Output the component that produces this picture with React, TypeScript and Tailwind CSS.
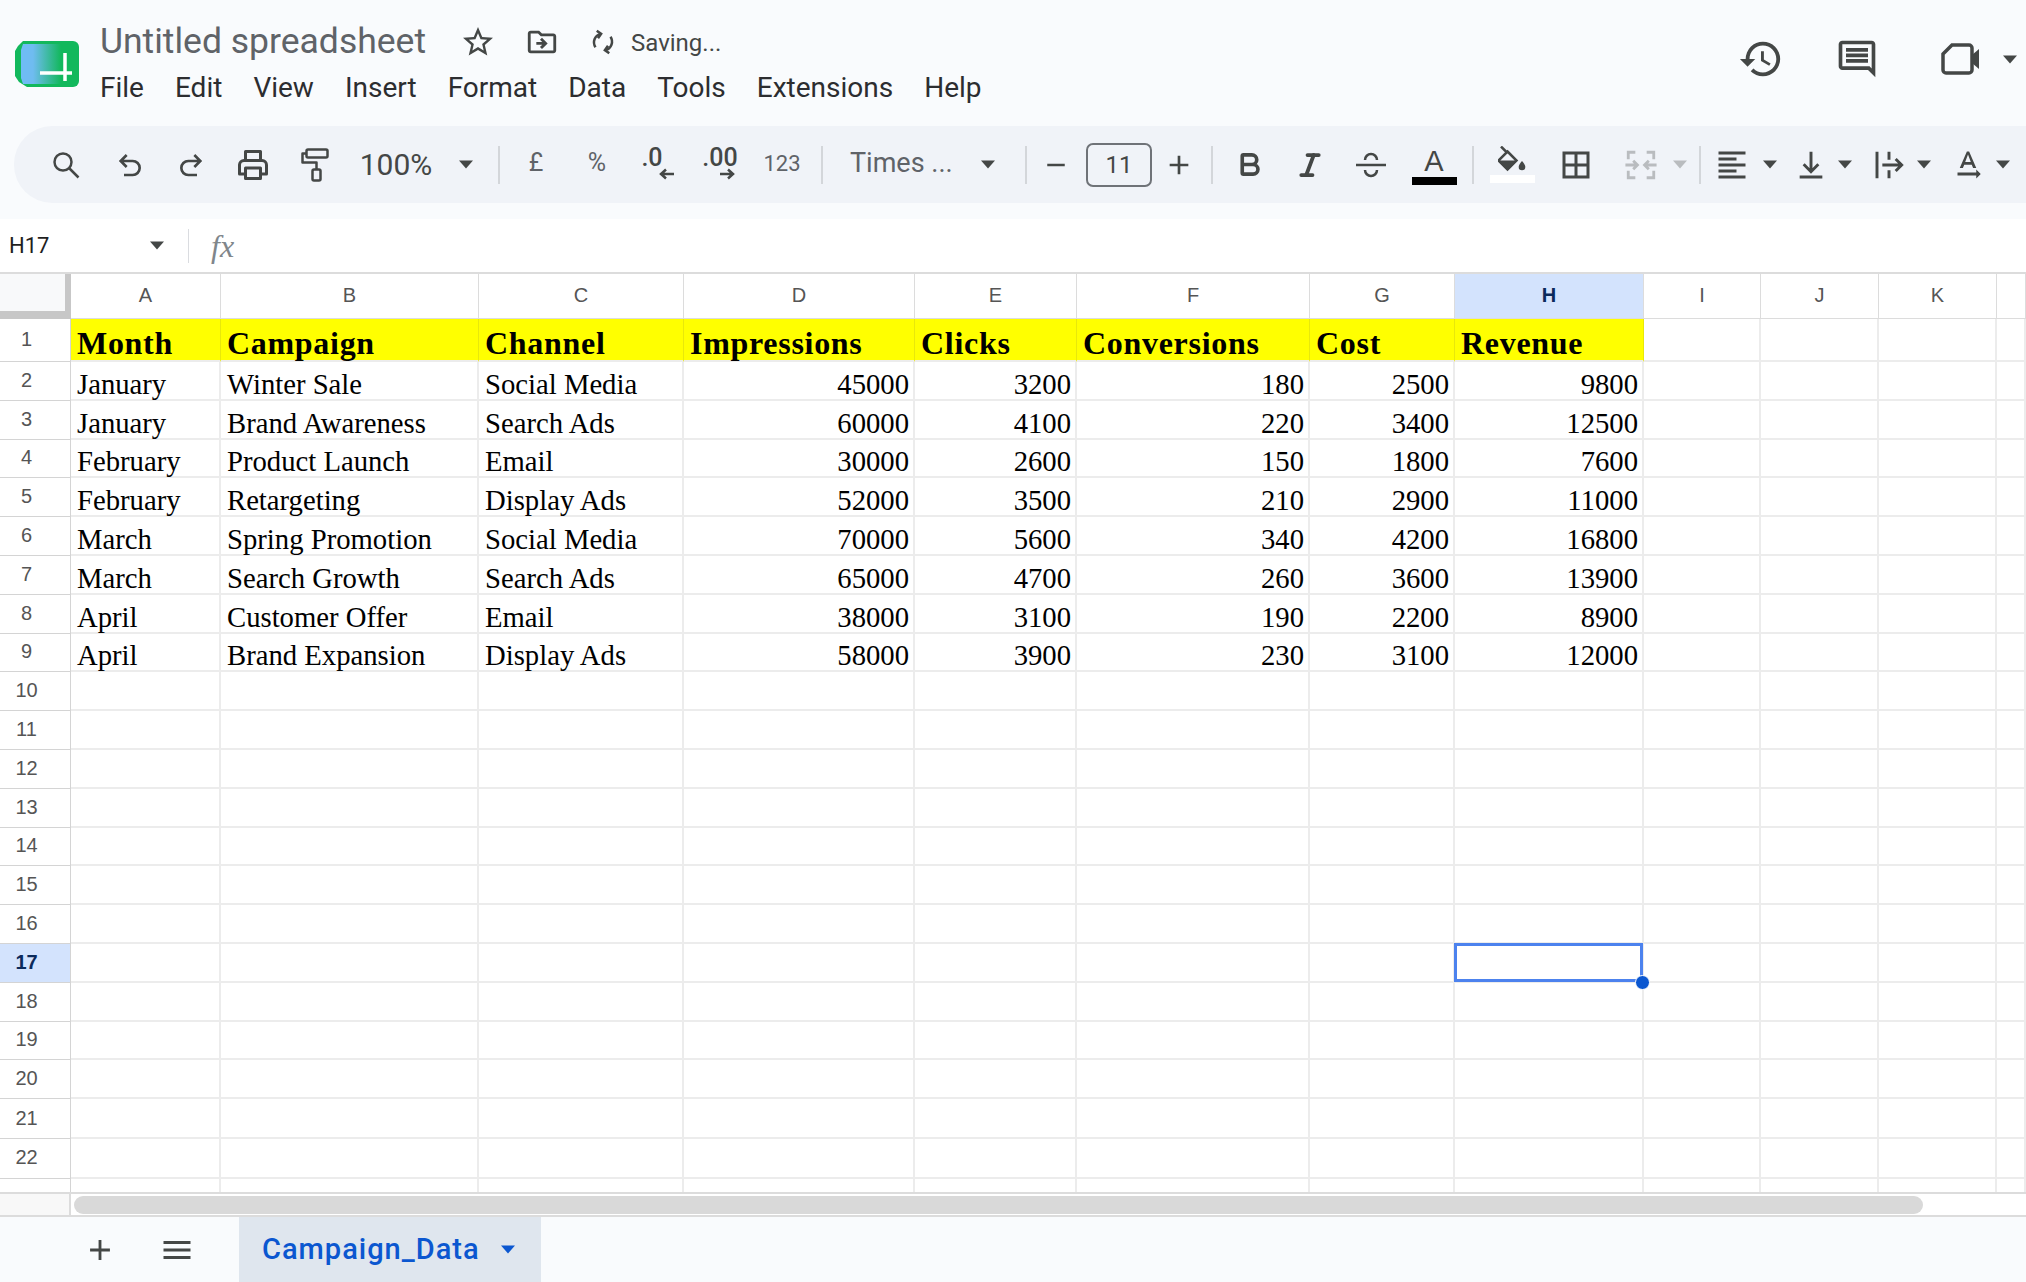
import type { ReactNode } from "react";
import { Bold, Italic } from "lucide-react";
import {
  MdBorderAll,
  MdFormatAlignLeft,
  MdTextRotationNone,
  MdAdd,
  MdRemove,
  MdMenu,
  MdOutlineStarBorder,
  MdOutlineDriveFileMove,
  MdHistory,
} from "react-icons/md";

const sheetCols = "grid-cols-[71px_150px_258px_205px_231px_162px_233px_145px_189px_117px_118px_118px_29px]";
const columns = ["A", "B", "C", "D", "E", "F", "G", "H", "I", "J", "K", ""];
const headers = ["Month", "Campaign", "Channel", "Impressions", "Clicks", "Conversions", "Cost", "Revenue"];
const rows = [
  ["January", "Winter Sale", "Social Media", "45000", "3200", "180", "2500", "9800"],
  ["January", "Brand Awareness", "Search Ads", "60000", "4100", "220", "3400", "12500"],
  ["February", "Product Launch", "Email", "30000", "2600", "150", "1800", "7600"],
  ["February", "Retargeting", "Display Ads", "52000", "3500", "210", "2900", "11000"],
  ["March", "Spring Promotion", "Social Media", "70000", "5600", "340", "4200", "16800"],
  ["March", "Search Growth", "Search Ads", "65000", "4700", "260", "3600", "13900"],
  ["April", "Customer Offer", "Email", "38000", "3100", "190", "2200", "8900"],
  ["April", "Brand Expansion", "Display Ads", "58000", "3900", "230", "3100", "12000"],
];
const menu = ["File", "Edit", "View", "Insert", "Format", "Data", "Tools", "Extensions", "Help"];

const Slot = ({ className, children }: { className: string; children?: ReactNode }) => (
  <div className={`flex shrink-0 items-center justify-center ${className}`}>{children}</div>
);

const Sep = ({ className }: { className: string }) => (
  <Slot className={className}>
    <div className="h-[38px] w-[2px] bg-[#d3d6da]" />
  </Slot>
);

const Caret = ({ light }: { light?: boolean }) => (
  <svg width="16" height="9" viewBox="0 0 16 9" className="shrink-0">
    <path d="M1 0.5h14L8 8.5z" fill={light ? "#b9bcbf" : "#444746"} />
  </svg>
);

const Logo = () => (
  <svg width="64" height="48" viewBox="0 0 64 48">
    <defs>
      <linearGradient id="logoFill" x1="0" x2="1" y1="0" y2="0">
        <stop offset="0" stopColor="#6fbcf6" />
        <stop offset="0.3" stopColor="#6fbcf0" />
        <stop offset="1" stopColor="#12b85c" />
      </linearGradient>
    </defs>
    <path d="M8 1h50a6 6 0 0 1 6 6v34a6 6 0 0 1-6 6H12L4 42 0 36V11l3-5z" fill="#12b85c" />
    <path d="M8 4h38v40H8l-2-6V10z" fill="url(#logoFill)" />
    <path d="M25 33h32M50 13v28" stroke="#fff" strokeWidth="3.5" fill="none" />
  </svg>
);

const Undo = ({ flip }: { flip?: boolean }) => (
  <svg width="32" height="32" viewBox="0 0 24 24" className={flip ? "-scale-x-100" : ""} fill="none" stroke="#444746" strokeWidth="2">
    <path d="M9.500 4.500 5 9l4.500 4.500M5 9h9a5 5 0 0 1 0 10.500H7.500" />
  </svg>
);

const DecimalArrow = ({ left }: { left?: boolean }) => (
  <svg width="16" height="12" viewBox="0 0 16 12" fill="none" stroke="#444746" strokeWidth="2.500" className={left ? "-scale-x-100" : ""}>
    <path d="M1 6h13M9 1.500 14 6l-5 4.500" />
  </svg>
);

const SearchIcon = () => (
  <svg width="28" height="28" viewBox="0 0 28 28" fill="none" stroke="#444746" strokeWidth="2.500">
    <circle cx="11" cy="11" r="8.500" />
    <path d="M17 17l9.500 9.500" />
  </svg>
);

const PrintIcon = () => (
  <svg width="36" height="36" viewBox="0 0 24 24" fill="none" stroke="#444746" strokeWidth="2" strokeLinejoin="round">
    <path d="M7 8V3h10v5M7 18H3v-6a3 3 0 0 1 3-3h12a3 3 0 0 1 3 3v6h-4M7 14h10v7H7z" />
  </svg>
);

const PaintIcon = () => (
  <svg width="30" height="34" viewBox="0 0 30 34" fill="none" stroke="#444746" strokeWidth="2.500" strokeLinejoin="round">
    <rect x="7.500" y="1.500" width="21" height="8" rx="1.500" />
    <path d="M7.500 5.500h-4v9h14v7" />
    <rect x="13.500" y="21.500" width="8" height="11" rx="1.500" />
  </svg>
);

const StrikeIcon = () => (
  <svg width="32" height="32" viewBox="0 0 32 32" fill="none" stroke="#444746" strokeWidth="2.500">
    <path d="M1 16h30M10 11a6 6 0 0 1 12 0M10 21a6 6 0 0 0 12 0" />
  </svg>
);

const FillIcon = () => (
  <svg width="28" height="26" viewBox="0 0 28 26" stroke="#444746" fill="#444746">
    <path d="M3 0.500l6.500 6.500" fill="none" strokeWidth="2.500" />
    <path d="M9.500 5.500l9 9-9 9-9-9z" fill="none" strokeWidth="2.500" />
    <path d="M1 14.500h17l-8.500 8.500z" stroke="none" />
    <path d="M24 15s-3.300 3.500-3.300 6a3.300 3.300 0 0 0 6.600 0c0-2.500-3.300-6-3.300-6z" stroke="none" />
  </svg>
);

const Merge = () => (
  <svg width="34" height="34" viewBox="0 0 24 24" fill="none" stroke="#b9bcbf" strokeWidth="2">
    <path d="M8 3H3v5M3 16v5h5M16 3h5v5M21 16v5h-5" />
    <path d="M1 12h8M6.500 9l3 3-3 3M23 12h-8M17.500 9l-3 3 3 3" />
  </svg>
);

const ValignIcon = () => (
  <svg width="32" height="32" viewBox="0 0 24 24" fill="none" stroke="#444746" strokeWidth="2.200">
    <path d="M12 2v15M6.500 11.500 12 17l5.500-5.500M3.500 21h17" />
  </svg>
);

const Wrap = () => (
  <svg width="32" height="32" viewBox="0 0 24 24" fill="none" stroke="#444746" strokeWidth="2.200">
    <path d="M3 2v20M12 2v6M12 16v6M7 12h14M17 7.500l4.500 4.500-4.500 4.500" />
  </svg>
);

const Sync = () => (
  <svg width="30" height="30" viewBox="0 0 24 24" fill="none" stroke="#444746" strokeWidth="2">
    <path d="M10 5.500a7 7 0 0 0-4 10.700M14 18.500a7 7 0 0 0 4-10.700" />
    <path d="M7 3l3.500 2.500L8 9M17 21l-3.500-2.500L16 15" />
  </svg>
);

const Comment = () => (
  <svg width="44" height="44" viewBox="0 0 24 24" fill="#444746">
    <path d="M21.990 4c0-1.100-.89-2-1.990-2H4c-1.100 0-2 .9-2 2v12c0 1.100.9 2 2 2h14l4 4-.01-18zM20 4v13.170L18.830 16H4V4h16zM6 12h12v2H6zm0-3h12v2H6zm0-3h12v2H6z" />
  </svg>
);

const Meet = () => (
  <svg width="42" height="34" viewBox="0 0 42 34">
    <path d="M12 3h17a3 3 0 0 1 3 3v22a3 3 0 0 1-3 3H6a3 3 0 0 1-3-3V12z" fill="none" stroke="#444746" strokeWidth="3.500" />
    <path d="M32 13l7-6v20l-7-6z" fill="#444746" />
  </svg>
);

function TitleBar() {
  return (
    <div className="flex h-[126px] items-start">
      <div className="ml-[15px] mt-[40px] shrink-0">
        <Logo />
      </div>
      <div className="ml-[21px] flex flex-col">
        <div className="mt-[20px] flex h-[44px] items-center text-[#444746]">
          <span className="w-[360px] text-[35.5px] leading-none text-[#5f6368]">Untitled spreadsheet</span>
          <MdOutlineStarBorder className="text-[36px]" />
          <MdOutlineDriveFileMove className="ml-[29px] text-[34px]" />
          <div className="ml-[29px]">
            <Sync />
          </div>
          <span className="ml-[13px] mt-[2px] text-[24px]">Saving...</span>
        </div>
        <div className="mt-[2px] flex gap-[31px] text-[28px] leading-[44px] text-[#2c2d30]">
          {menu.map((m) => (
            <span key={m}>{m}</span>
          ))}
        </div>
      </div>
      <div className="ml-auto mt-[36px] flex items-center">
        <MdHistory className="text-[46px] text-[#444746]" />
        <div className="ml-[51px]">
          <Comment />
        </div>
        <div className="ml-[61px]">
          <Meet />
        </div>
        <div className="ml-[20px] mr-[8px]">
          <Caret />
        </div>
      </div>
    </div>
  );
}

function Toolbar() {
  return (
    <div className="ml-[14px] flex h-[77px] items-center overflow-hidden rounded-l-[38px] bg-[#f0f3f8] pl-[22px] text-[#444746]">
      <Slot className="w-[60px]"><SearchIcon /></Slot>
      <Slot className="w-[68px]"><Undo /></Slot>
      <Slot className="w-[54px]"><Undo flip /></Slot>
      <Slot className="w-[70px]"><PrintIcon /></Slot>
      <Slot className="w-[52px]"><PaintIcon /></Slot>
      <Slot className="w-[112px] text-[30px]">100%</Slot>
      <Slot className="w-[28px]"><Caret /></Slot>
      <Sep className="w-[38px]" />
      <Slot className="w-[36px] pb-[4px] text-[25px] text-[#5f6368]">£</Slot>
      <Slot className="w-[86px] pb-[4px] text-[25px] text-[#5f6368]">%</Slot>
      <Slot className="w-[34px] flex-col pb-[2px] text-[25px] font-medium leading-[21px]">
        <span className="mr-[10px]">.0</span>
        <div className="ml-[20px]">
          <DecimalArrow left />
        </div>
      </Slot>
      <Slot className="w-[92px] flex-col pb-[2px] text-[25px] font-medium leading-[21px]">
        <span>.00</span>
        <div className="ml-[14px]">
          <DecimalArrow />
        </div>
      </Slot>
      <Slot className="w-[32px] pb-[3px] text-[22px] text-[#5f6368]">123</Slot>
      <Sep className="w-[48px]" />
      <Slot className="w-[124px] justify-start pb-[2px] pl-[4px] text-[27px] text-[#5f6368]">Times ...</Slot>
      <Slot className="w-[36px]"><Caret /></Slot>
      <Sep className="w-[40px]" />
      <Slot className="w-[20px]"><MdRemove className="shrink-0 text-[30px]" /></Slot>
      <Slot className="ml-[20px] h-[44px] w-[66px] rounded-[7px] border-2 border-[#6f7378] text-[24px]">11</Slot>
      <Slot className="w-[54px]"><MdAdd className="text-[32px]" /></Slot>
      <Sep className="w-[12px]" />
      <Slot className="w-[62px]"><Bold size={29} strokeWidth={3} /></Slot>
      <Slot className="w-[60px]"><Italic size={30} strokeWidth={3} /></Slot>
      <Slot className="w-[62px]"><StrikeIcon /></Slot>
      <Slot className="w-[64px] flex-col pt-[3px]">
        <span className="font-['Liberation_Sans',sans-serif] text-[29px] leading-[27px]">A</span>
        <div className="mt-[2px] h-[8px] w-[45px] bg-black" />
      </Slot>
      <Sep className="w-[14px]" />
      <Slot className="w-[64px] flex-col">
        <FillIcon />
        <div className="mt-[3px] h-[8px] w-[45px] bg-white" />
      </Slot>
      <Slot className="w-[64px]"><MdBorderAll className="text-[36px]" /></Slot>
      <Slot className="w-[66px]"><Merge /></Slot>
      <Slot className="w-[12px]"><Caret light /></Slot>
      <Sep className="w-[28px]" />
      <Slot className="w-[36px]"><MdFormatAlignLeft className="text-[36px]" /></Slot>
      <Slot className="w-[40px]"><Caret /></Slot>
      <Slot className="w-[42px]"><ValignIcon /></Slot>
      <Slot className="w-[26px]"><Caret /></Slot>
      <Slot className="ml-[10px] w-[42px]"><Wrap /></Slot>
      <Slot className="w-[28px]"><Caret /></Slot>
      <Slot className="w-[60px]"><MdTextRotationNone className="text-[36px]" /></Slot>
      <Slot className="w-[10px]"><Caret /></Slot>
    </div>
  );
}

function FormulaBar() {
  return (
    <div className="flex h-[53px] items-center bg-white">
      <span className="ml-[9px] w-[140px] text-[22px] text-[#1f1f1f]">H17</span>
      <Caret />
      <div className="ml-[23px] h-[34px] w-px bg-[#dadce0]" />
      <span className="ml-[22px] font-['Liberation_Serif',serif] text-[32px] italic text-[#80868b]">fx</span>
    </div>
  );
}

function ColumnHeader() {
  return (
    <div className={`grid h-[47px] ${sheetCols} border-t-2 border-[#dcdcdc] bg-white`}>
      <div className="border-b-[8px] border-r-[6px] border-[#c7c7c7] bg-[#f8f9fa]" />
      {columns.map((c) => (
        <div
          key={c || "rest"}
          className={`flex items-center justify-center border-b border-r border-[#dcdcdc] pb-[3px] font-['Liberation_Sans',sans-serif] text-[20px] ${
            c === "H" ? "bg-[#d3e3fd] font-bold text-[#0b2a5b]" : "text-[#555]"
          }`}
        >
          {c}
        </div>
      ))}
    </div>
  );
}

function RowLabel({ n, active }: { n: number; active?: boolean }) {
  return (
    <div
      className={`flex items-center justify-center border-b border-r border-[#d4d4d4] pb-[2px] pl-[2px] pr-[19px] font-['Liberation_Sans',sans-serif] text-[20px] ${
        active ? "bg-[#d3e3fd] font-bold text-[#0b2a5b]" : "text-[#555]"
      }`}
    >
      {n < 23 ? n : ""}
    </div>
  );
}

function Sheet() {
  const cellBase = "border-b-2 border-r-2 border-[#ececec]";
  return (
    <div className="h-[873px] overflow-hidden bg-white font-['Liberation_Serif',serif]">
      <div className={`grid h-[43px] ${sheetCols}`}>
        <RowLabel n={1} />
        {headers.map((h) => (
          <div key={h} className="flex items-end border-b-2 border-r border-[#ececec] border-r-[#e8e80a] bg-[#ffff00] pl-[6px] text-[32px] font-bold leading-[33px] tracking-[0.7px] text-black">
            {h}
          </div>
        ))}
        {[0, 1, 2, 3].map((i) => (
          <div key={i} className={cellBase} />
        ))}
      </div>
      {Array.from({ length: 22 }, (_, r) => r + 2).map((n) => {
        const row = rows[n - 2];
        return (
          <div key={n} className={`grid ${n >= 21 ? "h-[39.8px]" : "h-[38.8px]"} ${sheetCols}`}>
            <RowLabel n={n} active={n === 17} />
            {Array.from({ length: 12 }, (_, c) => c).map((c) => {
              const text = row?.[c];
              const numeric = c >= 3;
              return (
                <div
                  key={c}
                  className={`relative flex items-end overflow-visible ${cellBase} pl-[6px] pr-[4px] text-[28.7px] leading-[30px] text-black ${
                    numeric ? "justify-end" : ""
                  }`}
                >
                  {text}
                  {n === 17 && c === 7 && (
                    <div className="absolute -inset-y-[1px] -left-px -right-[1px] z-10 border-[3px] border-[#4c82ee]">
                      <div className="absolute -bottom-[11px] -right-[10px] size-[15px] rounded-full border border-white bg-[#0b57d0]" />
                    </div>
                  )}
                </div>
              );
            })}
          </div>
        );
      })}
    </div>
  );
}

export default function App() {
  return (
    <div className="flex h-screen w-full flex-col overflow-hidden bg-[#f9fbfd] font-['Roboto',sans-serif]">
      <TitleBar />
      <Toolbar />
      <div className="h-[16px] shrink-0" />
      <FormulaBar />
      <ColumnHeader />
      <Sheet />
      <div className="flex h-[25px] shrink-0 items-center border-y-2 border-[#dcdcdc] bg-white">
        <div className="h-full w-[71px] border-r-2 border-[#dcdcdc] bg-[#f8f8f8]" />
        <div className="ml-[3px] h-[18px] w-[1849px] rounded-full bg-[#d9d9d9]" />
      </div>
      <div className="flex h-[65px] shrink-0 items-stretch">
        <Slot className="ml-[70px] w-[60px]"><MdAdd className="text-[34px] text-[#444746]" /></Slot>
        <Slot className="ml-[17px] w-[60px]"><MdMenu className="text-[36px] text-[#444746]" /></Slot>
        <div className="ml-[32px] flex w-[302px] items-center bg-[#dfe6ee] pl-[23px] text-[29px] font-medium tracking-[1px] text-[#0b57d0]">
          Campaign_Data
          <div className="ml-[20px]">
            <svg width="16" height="9" viewBox="0 0 16 9"><path d="M1 0.5h14L8 8.5z" fill="#0b57d0" /></svg>
          </div>
        </div>
      </div>
    </div>
  );
}
